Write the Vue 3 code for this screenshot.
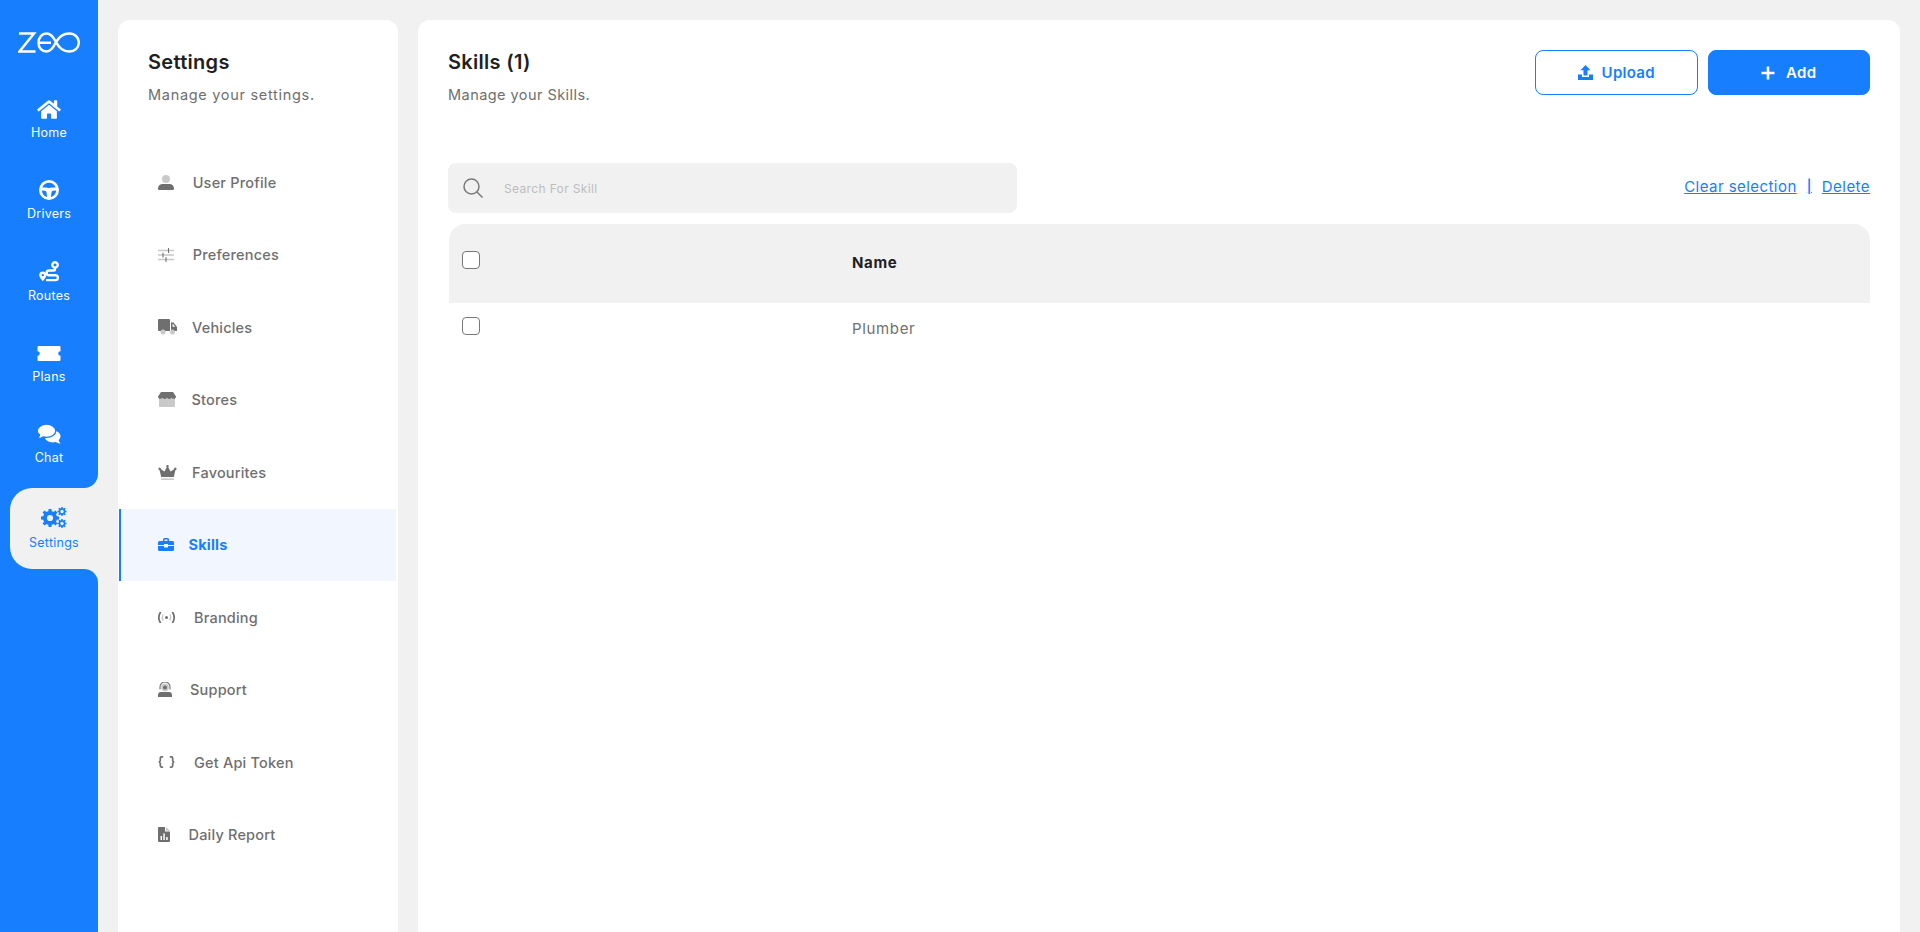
<script setup>
function gear(cx, cy, ro, ri, hole, teeth) {
  let d = ''
  const step = (Math.PI * 2) / teeth
  for (let i = 0; i < teeth; i++) {
    const a = i * step
    const pts = [
      [ri, a - step * 0.5],
      [ri, a - step * 0.3],
      [ro, a - step * 0.2],
      [ro, a + step * 0.2],
      [ri, a + step * 0.3]
    ]
    pts.forEach((p, j) => {
      const x = (cx + p[0] * Math.cos(p[1])).toFixed(2)
      const y = (cy + p[0] * Math.sin(p[1])).toFixed(2)
      d += (i === 0 && j === 0 ? 'M' : 'L') + x + ' ' + y
    })
  }
  d += `Z M${cx - hole} ${cy} a${hole} ${hole} 0 1 0 ${hole * 2} 0 a${hole} ${hole} 0 1 0 ${-hole * 2} 0Z`
  return d
}

const home = 'M280.37 148.26L96 300.11V464a16 16 0 0 0 16 16l112.06-.29a16 16 0 0 0 15.92-16V368a16 16 0 0 1 16-16h64a16 16 0 0 1 16 16v95.64a16 16 0 0 0 16 16.05L464 480a16 16 0 0 0 16-16V300L295.67 148.26a12.19 12.19 0 0 0-15.3 0zM571.6 251.47L488 182.56V44.05a12 12 0 0 0-12-12h-56a12 12 0 0 0-12 12v72.61L318.47 43a48 48 0 0 0-61 0L4.34 251.47a12 12 0 0 0-1.6 16.9l25.5 31A12 12 0 0 0 45.15 301l235.22-193.74a12.19 12.19 0 0 1 15.3 0L530.9 301a12 12 0 0 0 16.9-1.6l25.5-31a12 12 0 0 0-1.7-16.93z'

const mainNav = [
  { label: 'Home', w: 24, h: 21, vb: '0 0 576 512', paths: [{ c: 'f', d: home }] },
  {
    label: 'Drivers', w: 20, h: 20, vb: '0 0 20 20',
    paths: [
      { c: 'f', d: 'M10 0a10 10 0 1 0 0 20a10 10 0 1 0 0-20zM10 2.8c3 0 5.6 1.9 6.7 4.6l-3.7.2c-1 .1-1.8.5-3 .5s-2-.4-3-.5l-3.7-.2C4.400 4.700 7 2.800 10 2.800zM2.800 10.400l3.200.3c.8.2 1.300.9 1.500 1.700l.6 4.700c-2.900-.8-5.100-3.500-5.300-6.700zM11.900 17.100l.6-4.700c.2-.8.7-1.500 1.500-1.700l3.200-.3c-.2 3.200-2.400 5.900-5.300 6.700z' }
    ]
  },
  {
    label: 'Routes', w: 20, h: 21, vb: '0 0 20 21',
    paths: [
      { c: 's', d: 'M16 7V8.500A1 1 0 0 1 15 9.500H10a2.400 2.400 0 0 0 0 4.800h6.500a2.400 2.400 0 0 1 0 4.800H8' },
      { c: 's', d: 'M16 1.200a2.700 2.700 0 1 0 .01 0z' },
      { c: 'f', d: 'M3.800 10.500a3.600 3.600 0 0 0-3.600 3.600c0 2.300 3.600 6.200 3.600 6.200s3.600-3.900 3.600-6.200a3.600 3.600 0 0 0-3.600-3.600zM3.800 12.900a1.200 1.200 0 1 1 0 2.400a1.200 1.200 0 0 1 0-2.400z' }
    ]
  },
  {
    label: 'Plans', w: 24, h: 15, vb: '0 0 24 15',
    paths: [{ c: 'f', d: 'M1.500 0H22.500A1 1 0 0 1 23.500 1V5.200a2.300 2.300 0 0 0 0 4.600V14A1 1 0 0 1 22.500 15H1.500A1 1 0 0 1 .5 14V9.800a2.300 2.300 0 0 0 0-4.600V1A1 1 0 0 1 1.500 0z' }]
  },
  {
    label: 'Chat', w: 24, h: 20, vb: '0 0 24 20',
    paths: [
      { c: 'f', d: 'M15.500 6.500c4.600 0 8 2.500 8 5.700c0 1.500-.7 2.800-1.800 3.800c.2 1.300 1 2.700 1.900 3.500c-1.800 0-3.700-.7-4.900-1.500c-1 .3-2 .5-3.200.5c-3.500 0-6.300-1.600-7.500-3.900z' },
      { c: 'g', d: 'M9.500 .2C14.600 .2 18.800 3.100 18.800 6.800S14.600 13.400 9.500 13.400c-1.300 0-2.500-.2-3.600-.5c-1.300 1-3.400 1.800-5.500 1.800c1-1 1.900-2.500 2.100-3.900C1.100 9.800 .2 8.400 .2 6.800C.2 3.100 4.400 .2 9.500 .2z' }
    ]
  }
]

const settingsGear = [
  { c: 'f', d: gear(9, 11, 9.2, 7, 3.1, 8) },
  { c: 'f', d: gear(21, 4.500, 4.600, 3.400, 1.700, 8) },
  { c: 'f', d: gear(21, 16.500, 4.600, 3.400, 1.700, 8) }
]

const settingsNav = [
  {
    label: 'User Profile', textX: 34.700, w: 16, h: 15, vb: '0 0 16 15',
    paths: [
      { c: 'l', d: 'M8 0a4 4 0 1 0 0 8a4 4 0 1 0 0-8z' },
      { c: 'f', d: 'M4.500 9h7A4.500 4.500 0 0 1 16 13.500V14a1 1 0 0 1-1 1H1a1 1 0 0 1-1-1v-.5A4.500 4.500 0 0 1 4.500 9z' }
    ]
  },
  {
    label: 'Preferences', textX: 34.700, w: 16, h: 14, vb: '0 0 16 14',
    paths: [
      { c: 'ls', d: 'M0 2.500H16M0 7H16M0 11.500H16' },
      { c: 'fs thin', d: 'M10.500 .5V4.500M5 5V9M8 9.500V13.500' }
    ]
  },
  {
    label: 'Vehicles', textX: 34, w: 19, h: 16, vb: '0 0 19 16',
    paths: [
      { c: 'f', d: 'M1 0H11a1 1 0 0 1 1 1V12H1a1 1 0 0 1-1-1V1a1 1 0 0 1 1-1z' },
      { c: 'f', d: 'M13 3.500H15.500L19 8V12H13zM14.500 5V7.800H17.200L15 5z' },
      { c: 'l', d: 'M5 10.500a2.500 2.500 0 1 0 0 5a2.500 2.500 0 1 0 0-5zM14.500 10.500a2.500 2.500 0 1 0 0 5a2.500 2.500 0 1 0 0-5z' }
    ]
  },
  {
    label: 'Stores', textX: 33.500, w: 18, h: 15, vb: '0 0 18 15',
    paths: [
      { c: 'l', d: 'M1 6H17V14a1 1 0 0 1-1 1H2a1 1 0 0 1-1-1z' },
      { c: 'f', d: 'M3 0H15L18 4.500C18 7 15 7.500 13.500 5.800C12 7.500 10.500 7.500 9 5.800C7.500 7.500 6 7.500 4.500 5.800C3 7.500 0 7 0 4.500z' }
    ]
  },
  {
    label: 'Favourites', textX: 34, w: 19, h: 15, vb: '0 0 19 15',
    paths: [
      { c: 'f', d: 'M9.500 0a1.300 1.300 0 0 1 .8 2.300L12.500 6.500L16 4.200a1.300 1.300 0 1 1 1.400 1L15.800 12H3.200L1.600 5.200a1.300 1.300 0 1 1 1.400-1L6.500 6.500L8.700 2.300A1.300 1.300 0 0 1 9.500 0z' },
      { c: 'l', d: 'M3 13.400H16V15H3z' }
    ]
  },
  {
    label: 'Skills', textX: 30.500, active: true, w: 16, h: 13, vb: '0 0 16 13',
    paths: [
      { c: 'f', d: 'M5 3V1.500A1.500 1.500 0 0 1 6.500 0h3A1.500 1.500 0 0 1 11 1.500V3h3.500A1.500 1.500 0 0 1 16 4.500V7H10V6H6V7H0V4.500A1.500 1.500 0 0 1 1.500 3zM6.500 1.500V3h3V1.500z' },
      { c: 'f', d: 'M0 8H6V9.500H10V8H16V11.500A1.500 1.500 0 0 1 14.500 13H1.500A1.500 1.500 0 0 1 0 11.500z' }
    ]
  },
  {
    label: 'Branding', textX: 36, w: 17, h: 11, vb: '0 0 17 11',
    paths: [
      { c: 'fs', d: 'M2.300 .5C.5 3.500 .5 7.500 2.300 10.500M14.700 .5C16.500 3.500 16.500 7.500 14.700 10.500' },
      { c: 'ls', d: 'M5 2.500C4 4.500 4 6.500 5 8.500M12 2.500C13 4.500 13 6.500 12 8.500' },
      { c: 'f', d: 'M8.500 4a1.500 1.500 0 1 0 0 3a1.500 1.500 0 1 0 0-3z' }
    ]
  },
  {
    label: 'Support', textX: 32, w: 14, h: 15, vb: '0 0 14 15',
    paths: [
      { c: 'fs thin', d: 'M2 7V5a5 5 0 0 1 10 0V7' },
      { c: 'l', d: 'M7 1.600a3.800 3.800 0 1 0 0 7.600a3.800 3.800 0 1 0 0-7.600z' },
      { c: 'f', d: 'M7 3.400a2 2 0 1 0 0 4a2 2 0 1 0 0-4zM3 10h8a3 3 0 0 1 3 3V15H0V13a3 3 0 0 1 3-3z' }
    ]
  },
  {
    label: 'Get Api Token', textX: 36, w: 17, h: 12, vb: '0 0 17 12',
    paths: [
      { c: 'fs', d: 'M4.500 .9H3.500C2.500 .9 2.300 1.500 2.300 2.500V4.200C2.300 5.200 1.800 5.800 .8 6C1.800 6.200 2.300 6.800 2.300 7.800V9.500C2.300 10.500 2.500 11.100 3.500 11.100H4.500' },
      { c: 'fs', d: 'M12.500 .9H13.500C14.500 .9 14.700 1.500 14.700 2.500V4.200C14.700 5.200 15.200 5.800 16.200 6C15.200 6.200 14.700 6.800 14.700 7.800V9.500C14.700 10.500 14.500 11.100 13.500 11.100H12.500' }
    ]
  },
  {
    label: 'Daily Report', textX: 30.500, w: 12, h: 15, vb: '0 0 12 15',
    paths: [
      { c: 'f', fillRule: 'evenodd', d: 'M1 0H7V4.500H12V14a1 1 0 0 1-1 1H1a1 1 0 0 1-1-1V1a1 1 0 0 1 1-1zM2.500 9V13H4V9zM5.300 6.500V13H6.800V6.500zM8.200 10V13H9.700V10z' },
      { c: 'l', d: 'M8 0L12 3.700H8z' }
    ]
  }
]
</script>

<template>
  <div class="page">
    <aside class="rail">
      <div class="rail-top">
        <div class="logo">
          <svg width="62" height="21" viewBox="0 0 62 21" fill="none" stroke="#fff" stroke-width="2.500">
            <path d="M1 1.500H16L1.500 19.500H17.500" />
            <path d="M20.500 10.800H33M20.500 10.800C20.500 5.500 24 1.500 28.500 1.500C33 1.500 35.500 5 38 10C41 16 45 19.500 51 19.500C57 19.500 60.800 15.500 60.800 10.500C60.800 5.500 57 1.500 51 1.500C45 1.500 41 5 38 10C35.500 15.500 33 19.500 28.500 19.500C24 19.500 20.500 16 20.500 10.800Z" />
          </svg>
        </div>
        <a v-for="item in mainNav" :key="item.label" class="rail-item">
          <span class="rail-icon">
            <svg :width="item.w" :height="item.h" :viewBox="item.vb">
              <path v-for="(p, i) in item.paths" :key="i" :d="p.d" :class="p.c" />
            </svg>
          </span>
          <span>{{ item.label }}</span>
        </a>
      </div>
      <div class="rail-active-wrap">
        <a class="rail-active">
          <span class="rail-icon">
            <svg width="26" height="22" viewBox="0 0 26 22">
              <path v-for="(p, i) in settingsGear" :key="i" :d="p.d" class="f eo" />
            </svg>
          </span>
          <span>Settings</span>
        </a>
      </div>
      <div class="rail-bottom"></div>
    </aside>

    <nav class="settings">
      <header class="settings-head">
        <h2>Settings</h2>
        <p>Manage your settings.</p>
      </header>
      <a
        v-for="item in settingsNav"
        :key="item.label"
        class="settings-item"
        :class="{ active: item.active }"
      >
        <span class="settings-icon" :style="{ width: item.textX + 'px' }">
          <svg :width="item.w" :height="item.h" :viewBox="item.vb">
            <path
              v-for="(p, i) in item.paths"
              :key="i"
              :d="p.d"
              :class="p.c"
              :fill-rule="p.fillRule"
            />
          </svg>
        </span>
        <span>{{ item.label }}</span>
      </a>
    </nav>

    <main class="content">
      <div class="top">
        <div>
          <h1>Skills (1)</h1>
          <p>Manage your Skills.</p>
        </div>
        <div class="actions">
          <button class="btn outline">
            <svg width="15" height="15" viewBox="0 0 15 15">
              <path d="M7.500 0L12.500 5.200H9.500V10.500H5.500V5.200H2.500zM0 9.500H4V12H11V9.500H15V15H0z" fill="currentColor" />
            </svg>
            Upload
          </button>
          <button class="btn solid">
            <svg width="14" height="14" viewBox="0 0 14 14">
              <path d="M7 .5V13.500M.5 7H13.500" stroke="currentColor" stroke-width="2.600" fill="none" />
            </svg>
            Add
          </button>
        </div>
      </div>

      <div class="tools">
        <label class="search">
          <svg width="20" height="20" viewBox="0 0 20 20" fill="none" stroke="#7a7a7a" stroke-width="1.500">
            <circle cx="8.500" cy="8.500" r="7.500" />
            <path d="M14 14L19.500 19.500" />
          </svg>
          <span>Search For Skill</span>
        </label>
        <div class="links">
          <a>Clear selection</a>
          <a class="sep">|</a>
          <a>Delete</a>
        </div>
      </div>

      <div class="table">
        <div class="row head">
          <span class="check"></span>
          <span>Name</span>
        </div>
        <div class="row body">
          <span class="check"></span>
          <span>Plumber</span>
        </div>
      </div>
    </main>
  </div>
</template>

<style>
html, body { margin: 0; background: #f1f1f1; }
</style>

<style scoped>
.page {
  display: flex;
  height: 932px;
  overflow: hidden;
  background: #f1f1f1;
  font-family: Inter, "Open Sans", sans-serif;
  color: #6f6f6f;
}
svg { display: block; flex: none; }
.f { fill: currentColor; }
.eo { fill-rule: evenodd; }
.g { fill: currentColor; stroke: #177efe; stroke-width: 1.300; }
.s { fill: none; stroke: currentColor; stroke-width: 2.400; stroke-linecap: round; }
.l { fill: #c9c9c9; }
.ls { fill: none; stroke: #c9c9c9; stroke-width: 1.400; }
.fs { fill: none; stroke: currentColor; stroke-width: 1.700; stroke-linecap: round; }
.thin { stroke-width: 1.100; }

.rail {
  width: 98px;
  flex: none;
  display: flex;
  flex-direction: column;
  color: #fff;
}
.rail-top {
  background: #177efe;
  border-bottom-right-radius: 14px;
}
.logo {
  height: 81.500px;
  box-sizing: border-box;
  padding: 32px 0 0 18px;
}
.rail-item {
  height: 81.300px;
  box-sizing: border-box;
  padding-bottom: 5px;
  display: flex;
  flex-direction: column;
  align-items: center;
  justify-content: center;
  gap: 5px;
  font-size: 12.500px;
  line-height: 16px;
  letter-spacing: 0.25px;
}
.rail-icon {
  height: 22px;
  display: flex;
  align-items: center;
  justify-content: center;
}
.rail-active-wrap {
  background: #177efe;
  padding-left: 10px;
}
.rail-active {
  height: 81px;
  box-sizing: border-box;
  padding-top: 1px;
  background: #f1f1f1;
  border-radius: 22px 0 0 22px;
  color: #177efe;
  display: flex;
  flex-direction: column;
  align-items: center;
  justify-content: center;
  gap: 6px;
  font-size: 12.500px;
  line-height: 16px;
  letter-spacing: 0.25px;
}
.rail-bottom {
  flex: 1;
  background: #177efe;
  border-top-right-radius: 14px;
}

.settings {
  width: 280px;
  flex: none;
  margin: 20px 0 0 20px;
  background: #fff;
  border-radius: 12px 12px 0 0;
}
.settings-head {
  height: 126px;
  box-sizing: border-box;
  padding: 28px 0 0 30px;
}
.settings-head h2 {
  margin: 0;
  font-size: 20px;
  line-height: 28px;
  font-weight: 600;
  letter-spacing: 0.3px;
  color: #1e1f24;
}
.settings-head p {
  margin: 8px 0 0;
  font-size: 14.500px;
  line-height: 22px;
  letter-spacing: 0.7px;
  color: #6f6f6f;
}
.settings-item {
  height: 72.500px;
  box-sizing: border-box;
  margin: 0 2px 0 1px;
  padding-left: 39px;
  display: flex;
  align-items: center;
  font-size: 14.500px;
  font-weight: 500;
  letter-spacing: 0.2px;
  color: #6f6f6f;
}
.settings-item.active {
  padding-left: 37px;
  border-left: 2px solid #177efe;
  background: #f2f7ff;
  color: #177efe;
  font-weight: 700;
}
.settings-icon { display: block; flex: none; }

.content {
  flex: 1;
  margin: 20px 20px 0 20px;
  padding: 0 30px;
  background: #fff;
  border-radius: 12px 12px 0 0;
  min-width: 0;
}
.top {
  display: flex;
  justify-content: space-between;
  padding-top: 28px;
  height: 143px;
  box-sizing: border-box;
}
.top h1 {
  margin: 0;
  font-size: 20px;
  line-height: 28px;
  font-weight: 600;
  letter-spacing: 0.3px;
  color: #1e1f24;
}
.top p {
  margin: 8px 0 0;
  font-size: 14.500px;
  line-height: 22px;
  letter-spacing: 0.45px;
}
.actions {
  display: flex;
  gap: 10px;
  margin-top: 2px;
}
.btn {
  width: 162.500px;
  height: 45px;
  box-sizing: border-box;
  border-radius: 8px;
  display: flex;
  align-items: center;
  justify-content: center;
  gap: 9px;
  font: 600 15px Inter, sans-serif;
  letter-spacing: 0.3px;
  border: 1px solid #177efe;
}
.btn.outline { background: #fff; color: #177efe; }
.btn.solid { background: #177efe; color: #fff; gap: 11px; }

.tools {
  display: flex;
  justify-content: space-between;
  align-items: center;
  height: 50px;
}
.search {
  width: 569px;
  height: 50px;
  box-sizing: border-box;
  padding-left: 15px;
  background: #f1f1f1;
  border-radius: 8px;
  display: flex;
  align-items: center;
  gap: 21px;
  font-size: 12px;
  letter-spacing: 0.35px;
  color: #bdbdbd;
}
.links {
  display: flex;
  gap: 10px;
  margin-top: -4px;
  font-size: 15px;
  letter-spacing: 0.45px;
  color: #177efe;
}
.links a { text-decoration: underline; }
.links .sep { font-weight: 600; font-size: 13px; line-height: 18px; }

.table {
  margin: 11px 0 0 1px;
  font-size: 15px;
}
.row {
  display: grid;
  grid-template-columns: 404px 1fr;
  padding-left: 13px;
}
.row > span:last-child { margin-left: -14px; }
.head {
  height: 79px;
  align-items: start;
  background: #f1f1f1;
  border-radius: 16px 16px 0 0;
  font-weight: 700;
  color: #1e1f24;
  padding-top: 27px;
  box-sizing: border-box;
}
.body {
  padding-top: 14px;
  align-items: start;
}
.check {
  width: 18px;
  height: 18px;
  box-sizing: border-box;
  border: 1.500px solid #777;
  border-radius: 4px;
  background: #fff;
}
.head > span:last-child { padding-top: 2px; letter-spacing: 0.65px; }
.body > span:last-child { padding-top: 2px; letter-spacing: 0.65px; }
</style>
